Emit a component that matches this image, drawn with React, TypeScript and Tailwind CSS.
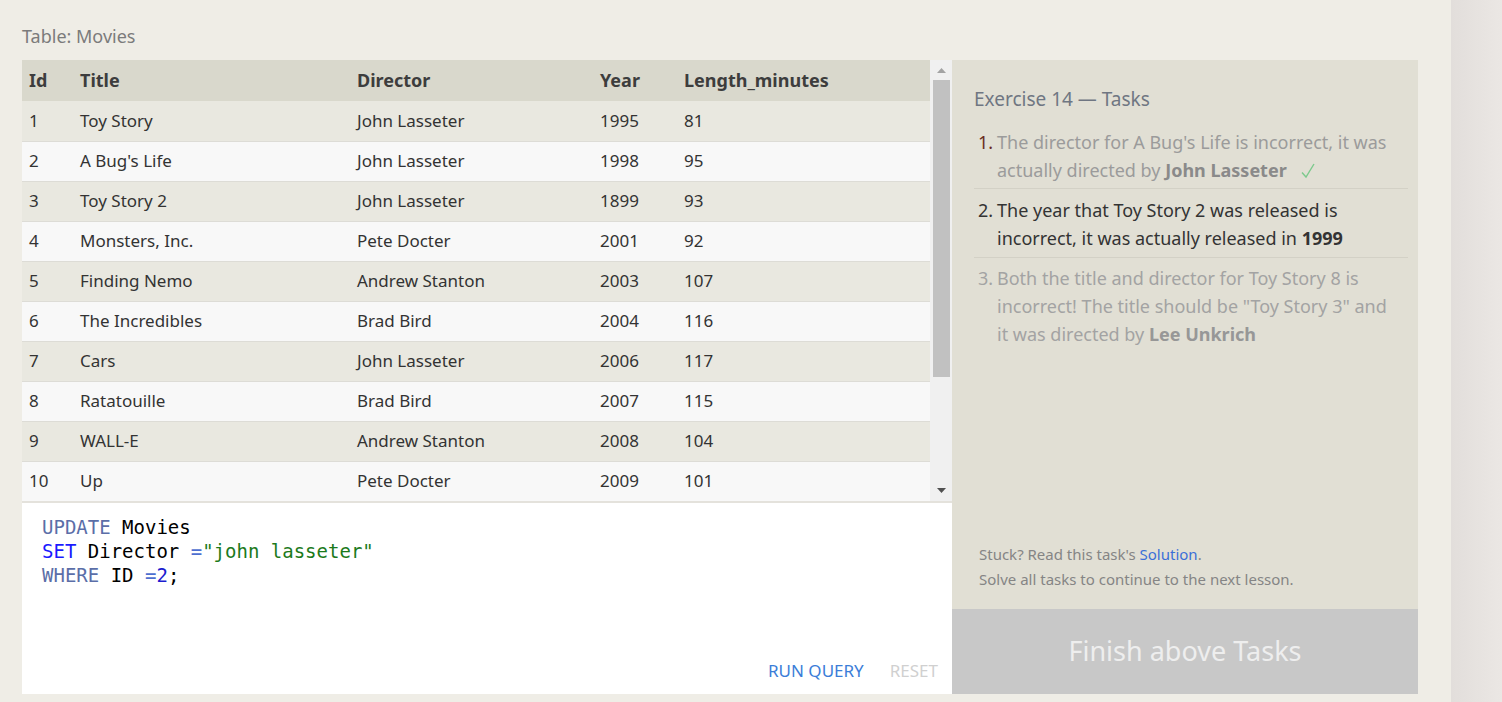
import React from 'react';

const movies = [
  [1, 'Toy Story', 'John Lasseter', 1995, 81],
  [2, "A Bug's Life", 'John Lasseter', 1998, 95],
  [3, 'Toy Story 2', 'John Lasseter', 1899, 93],
  [4, 'Monsters, Inc.', 'Pete Docter', 2001, 92],
  [5, 'Finding Nemo', 'Andrew Stanton', 2003, 107],
  [6, 'The Incredibles', 'Brad Bird', 2004, 116],
  [7, 'Cars', 'John Lasseter', 2006, 117],
  [8, 'Ratatouille', 'Brad Bird', 2007, 115],
  [9, 'WALL-E', 'Andrew Stanton', 2008, 104],
  [10, 'Up', 'Pete Docter', 2009, 101],
];

const App: React.FC = () => {
  return (
    <div className="flex h-[702px] w-[1502px] overflow-hidden bg-[#efede6] font-['Noto_Sans',sans-serif]">
      <div className="flex w-[1451px] flex-col pl-[22px]">
        <div className="pt-[24px] pb-[12px] text-[18px] leading-[24px] text-[#7b7b7b]">Table: Movies</div>

        <div className="flex">
          {/* Left: table + editor */}
          <div className="flex w-[930px] flex-col">
            <div className="flex h-[441px]">
              <div className="w-[908px] overflow-hidden">
                <table className="w-full table-fixed border-collapse text-[17px] text-[#333]">
                  <colgroup>
                    <col className="w-[58px]" />
                    <col className="w-[277px]" />
                    <col className="w-[243px]" />
                    <col className="w-[84px]" />
                    <col />
                  </colgroup>
                  <thead>
                    <tr className="h-[41px] bg-[#d9d8cc] text-left text-[18px] font-bold text-[#3d3d3d]">
                      <th className="pl-[7px]">Id</th>
                      <th>Title</th>
                      <th>Director</th>
                      <th>Year</th>
                      <th>Length_minutes</th>
                    </tr>
                  </thead>
                  <tbody>
                    {movies.map((m, i) => (
                      <tr
                        key={m[0]}
                        className={`h-[40px] border-b border-[#dddcd6] ${i % 2 === 0 ? 'bg-[#e9e8e0]' : 'bg-[#f8f8f8]'}`}
                      >
                        <td className="pl-[7px]">{m[0]}</td>
                        <td>{m[1]}</td>
                        <td>{m[2]}</td>
                        <td>{m[3]}</td>
                        <td>{m[4]}</td>
                      </tr>
                    ))}
                  </tbody>
                </table>
              </div>
              {/* scrollbar */}
              <div className="flex w-[22px] flex-col items-center bg-[#f0f0f0]">
                <div className="flex h-[20px] items-center justify-center">
                  <svg width="9" height="5" viewBox="0 0 9 5"><path d="M4.5 0L9 5H0z" fill="#a3a3a3" /></svg>
                </div>
                <div className="h-[297px] w-[17px] bg-[#c1c1c1]" />
                <div className="flex-1" />
                <div className="flex h-[22px] items-center justify-center">
                  <svg width="9" height="5" viewBox="0 0 9 5"><path d="M0 0H9L4.5 5z" fill="#505050" /></svg>
                </div>
              </div>
            </div>

            <div className="flex h-[193px] flex-col border-t-[2px] border-[#e4e2dc] bg-white">
              <pre className="px-[20px] pt-[12px] font-['DejaVu_Sans_Mono',monospace] text-[19px] leading-[24px] text-black">
                <span className="text-[#5b6ea8]">UPDATE</span> Movies{'\n'}
                <span className="text-[#1a1aff]">SET</span> Director <span className="text-[#4e6fd0]">=</span>
                <span className="text-[#1c7a1c]">"john lasseter"</span>{'\n'}
                <span className="text-[#5b6ea8]">WHERE</span> ID <span className="text-[#4e6fd0]">=</span>
                <span className="text-[#1c1ccf]">2</span>;
              </pre>
              <div className="flex-1" />
              <div className="flex justify-end gap-[26px] pr-[14px] pb-[11px] text-[17px] leading-[24px]">
                <span className="text-[#3b7dd8]">RUN QUERY</span>
                <span className="text-[#d0d0d0]">RESET</span>
              </div>
            </div>
          </div>

          {/* Right: tasks */}
          <div className="flex h-[634px] w-[466px] flex-col bg-[#e1dfd4]">
            <div className="flex flex-1 flex-col pt-[26px] pr-[10px] pl-[22px]">
              <div className="text-[19px] leading-[26px] text-[#6f7682]">Exercise 14 — Tasks</div>
              <ol className="mt-[16px] text-[18px] leading-[28px]">
                <li className="flex border-b border-[#d3d1c6] pb-[4px]">
                  <span className="w-[23px] shrink-0 pr-[4px] text-right text-[#6b2b1e]">1.</span>
                  <span className="pr-[6px] text-[#9b9b9b]">
                    The director for A Bug's Life is incorrect, it was actually directed by{' '}
                    <b className="text-[#8a8a8a]">John Lasseter</b>
                    <svg className="ml-[14px] inline-block align-[-2px]" width="14" height="16" viewBox="0 0 14 16">
                      <path d="M1 9.5L5 14L13 1" fill="none" stroke="#7cc98c" strokeWidth="1.4" />
                    </svg>
                  </span>
                </li>
                <li className="flex border-b border-[#d3d1c6] pt-[7px] pb-[5px]">
                  <span className="w-[23px] shrink-0 pr-[4px] text-right text-[#333]">2.</span>
                  <span className="pr-[6px] text-[#333]">
                    The year that Toy Story 2 was released is incorrect, it was actually released in <b>1999</b>
                  </span>
                </li>
                <li className="flex pt-[6px]">
                  <span className="w-[23px] shrink-0 pr-[4px] text-right text-[#a3a3a3]">3.</span>
                  <span className="pr-[6px] text-[#a3a3a3]">
                    Both the title and director for Toy Story 8 is incorrect! The title should be "Toy Story 3" and it was
                    directed by <b className="text-[#979797]">Lee Unkrich</b>
                  </span>
                </li>
              </ol>
              <div className="flex-1" />
              <div className="pl-[5px] pb-[17px] text-[15px] leading-[25px] text-[#858585]">
                <div>
                  Stuck? Read this task's <span className="text-[#3b6fd8]">Solution</span>.
                </div>
                <div>Solve all tasks to continue to the next lesson.</div>
              </div>
            </div>
            <div className="flex h-[85px] items-center justify-center bg-[#c8c8c8] text-[27px] text-[#eeeeee]">
              Finish above Tasks
            </div>
          </div>
        </div>
      </div>
      <div className="flex-1 bg-gradient-to-r from-[#e2dedb] to-[#ebe7e4]" />
    </div>
  );
};

export default App;
